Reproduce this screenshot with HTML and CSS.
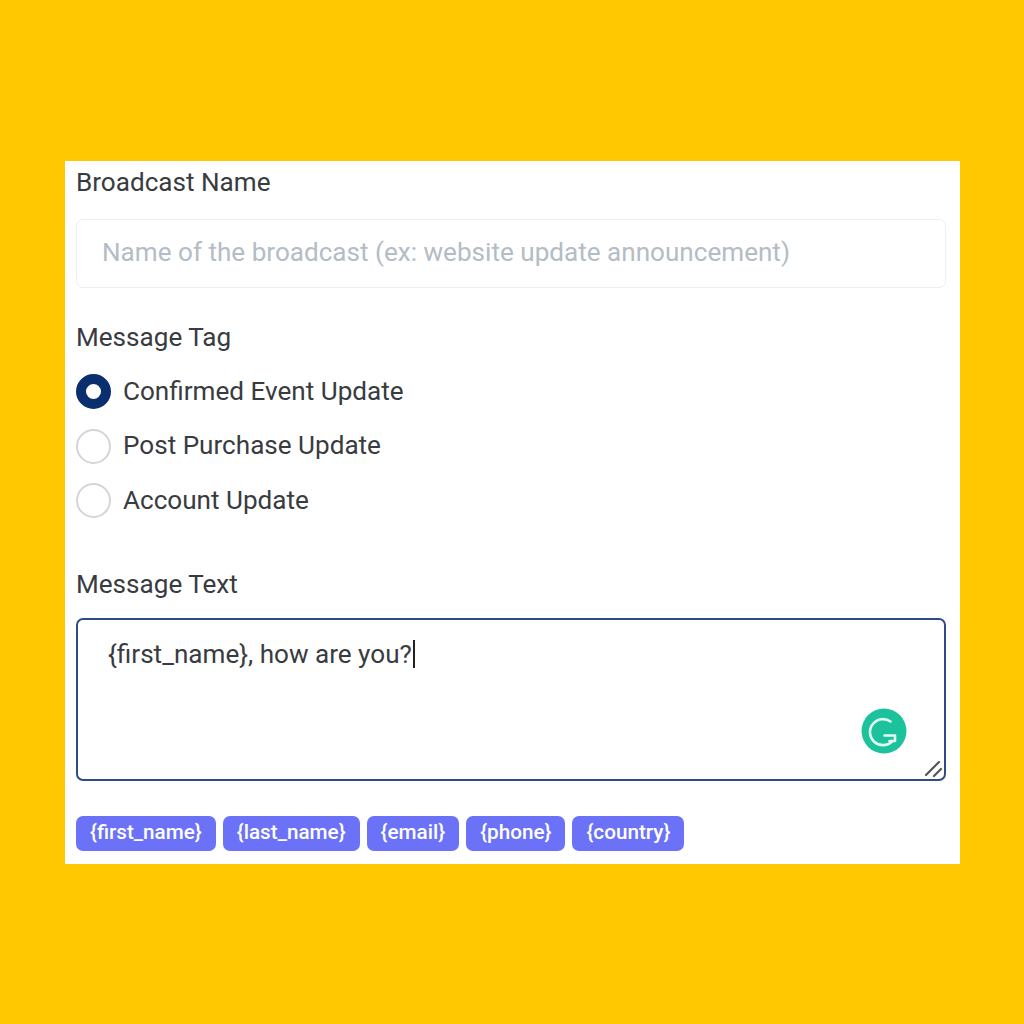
FILE: index.html
```html
<!DOCTYPE html>
<html lang="en">
<head>
<meta charset="utf-8">
<title>Broadcast</title>
<link rel="stylesheet" href="styles.css">
</head>
<body>
<main class="card">
  <label class="label label-first">Broadcast Name</label>
  <div class="input">Name of the broadcast (ex: website update announcement)</div>
  <label class="label label-tag">Message Tag</label>
  <div class="radios">
    <div class="radio-row"><span class="radio checked"></span><span class="radio-text">Confirmed Event Update</span></div>
    <div class="radio-row"><span class="radio"></span><span class="radio-text">Post Purchase Update</span></div>
    <div class="radio-row"><span class="radio"></span><span class="radio-text">Account Update</span></div>
  </div>
  <label class="label label-text">Message Text</label>
  <div class="textarea">
    <span class="typed">{first_name}, how are you?</span><span class="caret"></span>
    <svg class="grammarly" viewBox="0 0 46 46" aria-hidden="true">
      <circle cx="23" cy="23" r="22.5" fill="#1cc29c"/>
      <path d="M29.5 13.5A13 13 0 1 0 31 33.5" fill="none" stroke="#e4f8f2" stroke-width="2.6" stroke-linecap="round"/>
      <path d="M23.5 27.5H33.5M28.5 33H34V27.5" fill="none" stroke="#e4f8f2" stroke-width="2.6" stroke-linecap="round" stroke-linejoin="round"/>
    </svg>
    <svg class="grip" viewBox="0 0 20 20" aria-hidden="true">
      <path d="M2 17L15 4M10 18L17 11" fill="none" stroke="#555" stroke-width="2.2" stroke-linecap="round"/>
    </svg>
  </div>
  <div class="tags">
    <span class="tag">{first_name}</span>
    <span class="tag">{last_name}</span>
    <span class="tag">{email}</span>
    <span class="tag">{phone}</span>
    <span class="tag">{country}</span>
  </div>
</main>
</body>
</html>
```
FILE: styles.css
```css
* { box-sizing: border-box; }
html, body { margin: 0; height: 100%; }
body {
  background: #ffc800;
  padding: 161px 64px 160px 65px;
  font-family: Roboto, "Liberation Sans", sans-serif;
  color: #383c41;
}
.card {
  background: #fff;
  height: 703px;
  padding: 0 14px 0 11px;
  display: flex;
  flex-direction: column;
  align-items: stretch;
}
.label { display: block; font-size: 26.1px; line-height: 30px; }
.label-first { margin-top: 6px; }
.label-tag { margin-top: 34px; }
.label-text { margin-top: 51px; }
.input {
  margin-top: 22px;
  height: 69px;
  border: 1.5px solid #eceef0;
  border-radius: 7px;
  padding: 0 25px 4px;
  display: flex;
  align-items: center;
  font-size: 26.1px;
  color: #b4bcc6;
}
.radios { margin-top: 22px; display: flex; flex-direction: column; gap: 19.5px; }
.radio-row { display: flex; align-items: center; gap: 12px; font-size: 26.1px; height: 35px; }
.radio-text { padding-bottom: 2px; }
.radio {
  width: 35px; height: 35px; border-radius: 50%;
  border: 2px solid #d3d5d8; background: #fff; flex: none;
}
.radio.checked { border: 10px solid #0a2f6e; }
.textarea {
  position: relative;
  margin-top: 19px;
  height: 163px;
  border: 2px solid #2f4d85;
  border-radius: 7px;
  padding: 19px 30px;
  font-size: 26.1px;
  line-height: 30px;
  display: flex;
  align-items: flex-start;
}
.caret { display: inline-block; width: 2px; height: 28px; background: #222; margin: 1px 0 0 1px; }
.grammarly { position: absolute; right: 37px; bottom: 25px; width: 46px; height: 46px; }
.grip { position: absolute; right: 0; bottom: 1px; width: 20px; height: 20px; }
.tags { margin-top: 35px; display: flex; gap: 7px; }
.tag {
  background: #6b72f8;
  color: #fff;
  font-size: 20.7px;
  font-weight: 500;
  height: 34.5px;
  line-height: 32px;
  padding: 0 14px;
  border-radius: 7px;
}
```
